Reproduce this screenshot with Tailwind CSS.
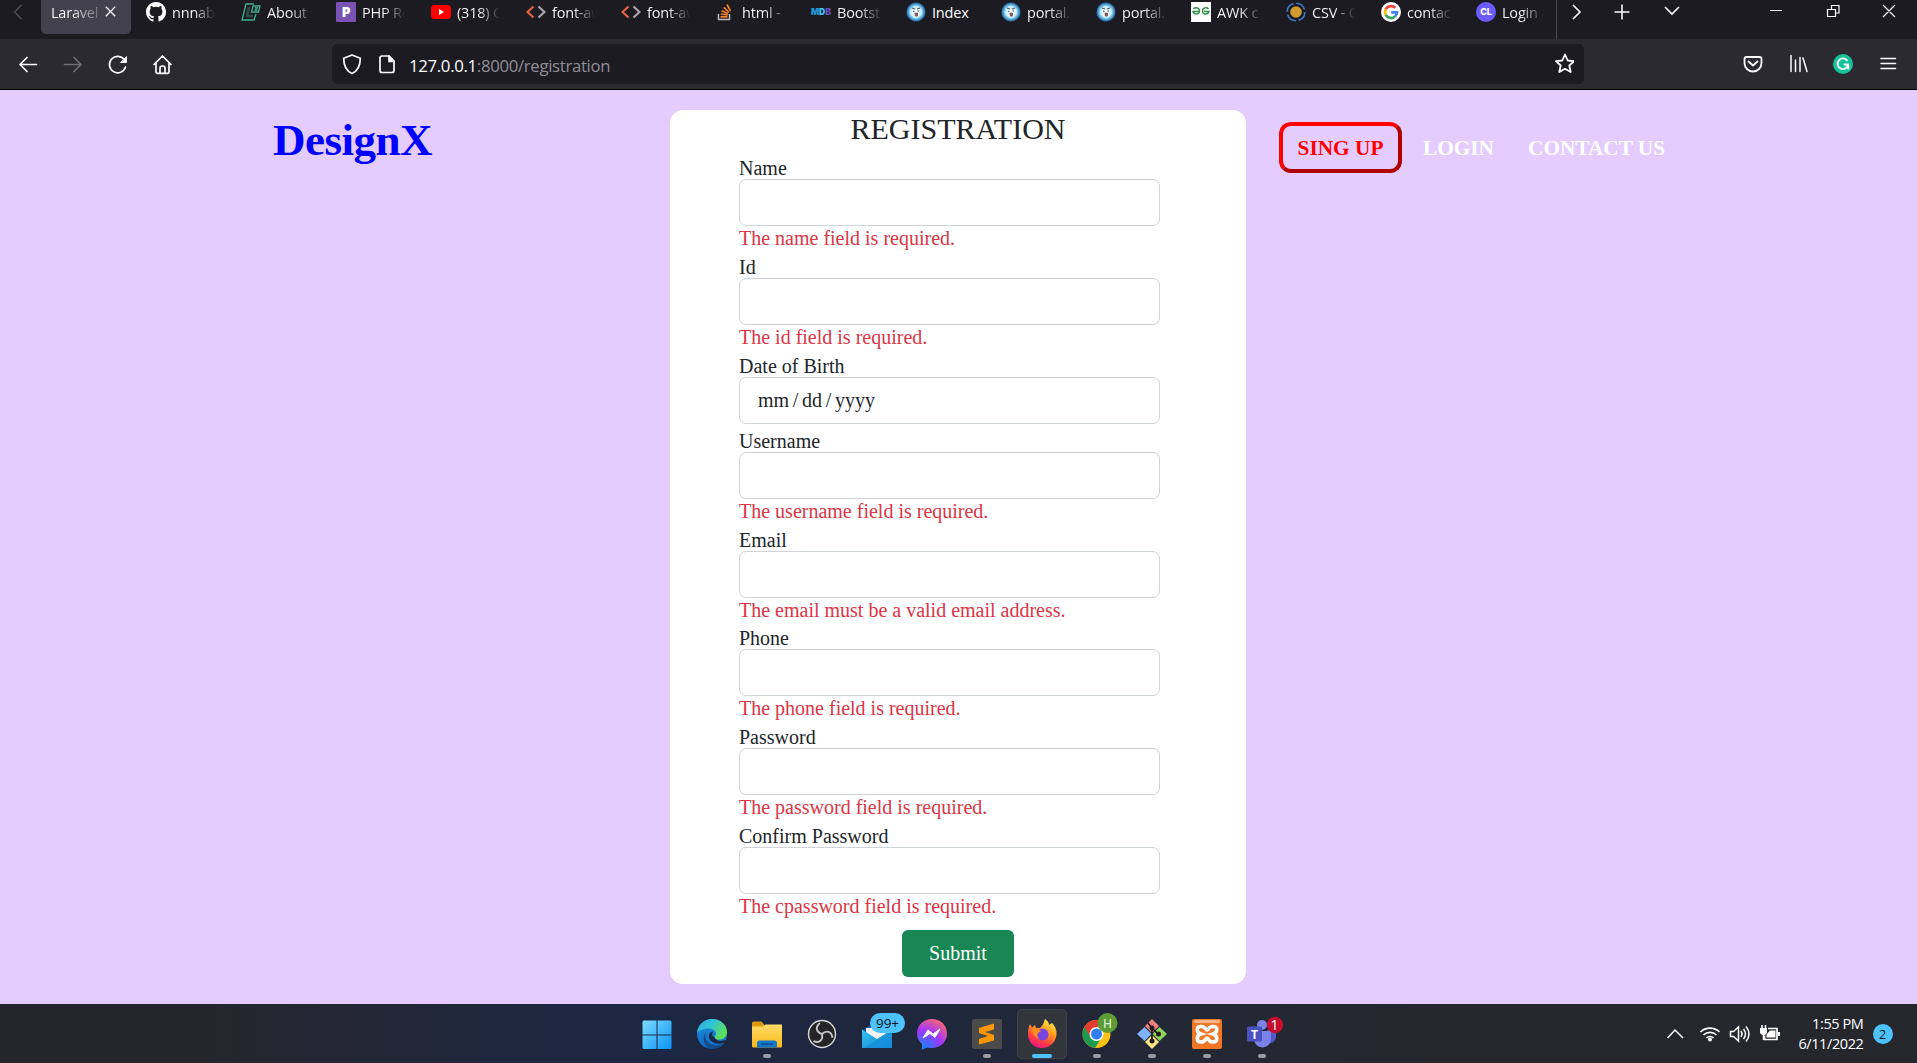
<!DOCTYPE html>
<html lang="en">
<head>
<meta charset="utf-8">
<title>Laravel</title>
<script src="https://cdn.jsdelivr.net/npm/@tailwindcss/browser@4"></script>
</head>
<body class="w-[1917px] h-[1063px] overflow-hidden flex flex-col bg-[#e4ccff] font-['Liberation_Serif',serif]">

<svg class="absolute w-0 h-0">
  <defs>
    <linearGradient id="win" gradientUnits="userSpaceOnUse" x1="2" y1="1" x2="31" y2="30"><stop offset="0" stop-color="#7fdcff"/><stop offset="1" stop-color="#0a94f5"/></linearGradient>
    <linearGradient id="edgeA" x1="0" y1="0" x2="1" y2=".6"><stop offset="0" stop-color="#2aa8e8"/><stop offset=".5" stop-color="#35c6d2"/><stop offset="1" stop-color="#5fe050"/></linearGradient>
    <linearGradient id="edgeB" x1="0" y1="0" x2="0" y2="1"><stop offset="0" stop-color="#2090e0"/><stop offset="1" stop-color="#0d6cc4"/></linearGradient>
    <linearGradient id="fold" x1="0" y1="0" x2="0" y2="1"><stop offset="0" stop-color="#ffdc6b"/><stop offset="1" stop-color="#f9b917"/></linearGradient>
    <radialGradient id="msg" cx=".2" cy="1" r="1.15"><stop offset="0" stop-color="#0a8cff"/><stop offset=".55" stop-color="#a035ff"/><stop offset="1" stop-color="#ff6b62"/></radialGradient>
    <linearGradient id="ffx" x1=".8" y1="0" x2=".3" y2="1"><stop offset="0" stop-color="#fff04a"/><stop offset=".4" stop-color="#ff9a1e"/><stop offset=".75" stop-color="#ff3a45"/><stop offset="1" stop-color="#f0148c"/></linearGradient>
    <radialGradient id="face"><stop offset="0" stop-color="#fff"/><stop offset=".55" stop-color="#c9eefb"/><stop offset=".8" stop-color="#4a9fd4"/><stop offset="1" stop-color="#1d4f86"/></radialGradient>
    <linearGradient id="mail" x1="0" y1="0" x2="1" y2="1"><stop offset="0" stop-color="#35c3f2"/><stop offset="1" stop-color="#1183d0"/></linearGradient>
    <symbol id="code" viewBox="0 0 20 20"><path d="M7.500 4.500L1.500 10l6 5.500" fill="none" stroke="#e8663f" stroke-width="2.200"/><path d="M12.500 4.500l6 5.500-6 5.500" fill="none" stroke="#a9a9ad" stroke-width="2.200"/></symbol>
    <symbol id="portal" viewBox="0 0 20 20"><circle cx="10" cy="10" r="9.700" fill="url(#face)"/><path d="M6 6l3 1M11 7l3-1" stroke="#555" stroke-width="1.200"/><path d="M8.500 11l1.500-.5 2 .5v2.500l-1.500 1.300-1.500-1z" fill="#8a5550"/><path d="M7 9.300h1.500M11.500 9h1.500" stroke="#444" stroke-width="1"/></symbol>
    <symbol id="cl" viewBox="0 0 20 20"><circle cx="10" cy="10" r="10" fill="#6c5cff"/><text x="10" y="13.300" text-anchor="middle" font-family="Inter" font-weight="800" font-size="9" fill="#fff">CL</text></symbol>
  </defs>
</svg>

<!-- Tab strip -->
<div class="h-[39px] shrink-0 flex bg-[#1c1b22] text-[#fbfbfe] text-[14.500px] tracking-[-0.2px] font-['Open_Sans',sans-serif]">
  <div class="w-[41px] flex"><svg class="w-[10px] h-[16px] ml-[13px] mt-[4px]" viewBox="0 0 10 16" fill="none" stroke="#4b4a52" stroke-width="1.500"><path d="M8.500 1L1.500 8l7 7"/></svg></div>
  <div class="w-[90px] h-[34px] flex rounded-b-[5px] bg-[#42414d] pl-[10px]">
    <span class="w-[47px] h-[26px] leading-[26px] overflow-hidden whitespace-nowrap bg-linear-to-r from-white from-40% to-white/25 bg-clip-text text-transparent">Laravel</span>
    <svg class="w-[11px] h-[11px] ml-[7px] mt-[6px]" viewBox="0 0 11 11" stroke="#fbfbfe" stroke-width="1.300"><path d="M.8.8l9.400 9.400M10.200.8L.8 10.200"/></svg>
  </div>
  <div class="w-[1426px] flex pl-[15px] border-r border-[#4a4950]">
    <div class="w-[95px] shrink-0 flex pt-[2px]"><svg class="w-5 h-5 shrink-0" viewBox="0 0 16 16" fill="#fff"><path d="M8 0C3.580 0 0 3.580 0 8c0 3.540 2.290 6.530 5.470 7.590.4.070.55-.17.55-.38 0-.19-.01-.82-.01-1.490-2.010.37-2.530-.49-2.690-.94-.09-.23-.48-.94-.82-1.130-.28-.15-.68-.52-.01-.53.63-.01 1.080.58 1.230.82.720 1.210 1.870.87 2.330.66.070-.52.280-.87.510-1.070-1.780-.2-3.640-.89-3.640-3.950 0-.87.310-1.590.82-2.150-.08-.2-.36-1.020.08-2.120 0 0 .67-.21 2.200.82a7.400 7.400 0 0 1 4 0c1.530-1.040 2.200-.82 2.200-.82.440 1.100.16 1.920.08 2.120.510.560.82 1.270.82 2.150 0 3.070-1.870 3.750-3.650 3.950.29.25.54.73.54 1.480 0 1.070-.01 1.930-.01 2.200 0 .21.150.46.550.38A8 8 0 0 0 8 0z"/></svg><span class="ml-[6px] w-[43px] h-[22px] leading-[22px] overflow-hidden whitespace-nowrap bg-linear-to-r from-white from-50% to-white/0 bg-clip-text text-transparent">nnnabil</span></div>
    <div class="w-[95px] shrink-0 flex pt-[2px]"><svg class="w-5 h-5 shrink-0" viewBox="0 0 20 20" fill="none" stroke="#43b08a" stroke-width="1.300"><path d="M13 2H5L1 18h12l2-6"/><path d="M8 5L6 14h6" stroke="#2c4d44" stroke-width="2.500"/><path d="M12 4h7l-1.500 6h-7zM14 6h3M13.500 8h3"/></svg><span class="ml-[6px] w-[43px] h-[22px] leading-[22px] whitespace-nowrap bg-linear-to-r from-white from-50% to-white/20 bg-clip-text text-transparent">About</span></div>
    <div class="w-[95px] shrink-0 flex pt-[2px]"><svg class="w-5 h-5 shrink-0" viewBox="0 0 20 20"><rect width="20" height="20" rx="1" fill="#7952b3"/><text x="10" y="15.200" text-anchor="middle" font-family="Open Sans" font-weight="800" font-size="14.500" fill="#fff">P</text></svg><span class="ml-[6px] w-[43px] h-[22px] leading-[22px] overflow-hidden whitespace-nowrap bg-linear-to-r from-white from-50% to-white/0 bg-clip-text text-transparent">PHP Re</span></div>
    <div class="w-[95px] shrink-0 flex pt-[2px]"><svg class="w-5 h-5 shrink-0" viewBox="0 0 20 20"><rect y="3" width="20" height="14" rx="3.500" fill="#f00"/><path d="M8 7l5 3-5 3z" fill="#fff"/></svg><span class="ml-[6px] w-[43px] h-[22px] leading-[22px] overflow-hidden whitespace-nowrap bg-linear-to-r from-white from-50% to-white/0 bg-clip-text text-transparent">(318) C</span></div>
    <div class="w-[95px] shrink-0 flex pt-[2px]"><svg class="w-5 h-5 shrink-0"><use href="#code"/></svg><span class="ml-[6px] w-[43px] h-[22px] leading-[22px] overflow-hidden whitespace-nowrap bg-linear-to-r from-white from-50% to-white/0 bg-clip-text text-transparent">font-aw</span></div>
    <div class="w-[95px] shrink-0 flex pt-[2px]"><svg class="w-5 h-5 shrink-0"><use href="#code"/></svg><span class="ml-[6px] w-[43px] h-[22px] leading-[22px] overflow-hidden whitespace-nowrap bg-linear-to-r from-white from-50% to-white/0 bg-clip-text text-transparent">font-aw</span></div>
    <div class="w-[95px] shrink-0 flex pt-[2px]"><svg class="w-5 h-5 shrink-0" viewBox="0 0 20 20" fill="none"><path d="M2.500 12v5.500h11V12" stroke="#bcbbbb" stroke-width="1.500"/><path d="M4.500 14.800h7M4.700 12l7 1M5.500 8.700l6.500 3M7.700 5.300l5.300 5M11 2.500l3.500 6.300" stroke="#f48024" stroke-width="1.700"/></svg><span class="ml-[6px] w-[43px] h-[22px] leading-[22px] whitespace-nowrap bg-linear-to-r from-white from-50% to-white/20 bg-clip-text text-transparent">html -</span></div>
    <div class="w-[95px] shrink-0 flex pt-[2px]"><svg class="w-5 h-5 shrink-0" viewBox="0 0 20 20"><g font-family="Inter" font-weight="900" font-size="9"><text x="0" y="13" textLength="8" lengthAdjust="spacingAndGlyphs" fill="#2196d8">M</text><text x="8" y="13" textLength="6" lengthAdjust="spacingAndGlyphs" fill="#3ec6f2">D</text><text x="14" y="13" textLength="6" lengthAdjust="spacingAndGlyphs" fill="#6649b5">B</text></g></svg><span class="ml-[6px] w-[43px] h-[22px] leading-[22px] whitespace-nowrap bg-linear-to-r from-white from-50% to-white/10 bg-clip-text text-transparent">Bootst</span></div>
    <div class="w-[95px] shrink-0 flex pt-[2px]"><svg class="w-5 h-5 shrink-0"><use href="#portal"/></svg><span class="ml-[6px] w-[43px] h-[22px] leading-[22px] whitespace-nowrap">Index</span></div>
    <div class="w-[95px] shrink-0 flex pt-[2px]"><svg class="w-5 h-5 shrink-0"><use href="#portal"/></svg><span class="ml-[6px] w-[43px] h-[22px] leading-[22px] whitespace-nowrap bg-linear-to-r from-white from-50% to-white/10 bg-clip-text text-transparent">portal.</span></div>
    <div class="w-[95px] shrink-0 flex pt-[2px]"><svg class="w-5 h-5 shrink-0"><use href="#portal"/></svg><span class="ml-[6px] w-[43px] h-[22px] leading-[22px] whitespace-nowrap bg-linear-to-r from-white from-50% to-white/10 bg-clip-text text-transparent">portal.</span></div>
    <div class="w-[95px] shrink-0 flex pt-[2px]"><svg class="w-5 h-5 shrink-0" viewBox="0 0 20 20"><rect width="20" height="20" fill="#fff"/><g fill="none" stroke="#2f8d46" stroke-width="1.400"><path d="M2.500 7C4 5 8.500 5.500 8.500 9s-5 4.500-6.500 0.500h6.500M17.500 7C16 5 11.500 5.500 11.500 9s5 4.500 6.500 0.500h-5"/></g></svg><span class="ml-[6px] w-[43px] h-[22px] leading-[22px] whitespace-nowrap bg-linear-to-r from-white from-50% to-white/10 bg-clip-text text-transparent">AWK c</span></div>
    <div class="w-[95px] shrink-0 flex pt-[2px]"><svg class="w-5 h-5 shrink-0" viewBox="0 0 20 20"><circle cx="10" cy="10" r="5.800" fill="#d09a32"/><circle cx="10" cy="10" r="8.800" fill="none" stroke="#3d79c4" stroke-width="1.600" stroke-dasharray="11 2.820"/></svg><span class="ml-[6px] w-[43px] h-[22px] leading-[22px] overflow-hidden whitespace-nowrap bg-linear-to-r from-white from-50% to-white/0 bg-clip-text text-transparent">CSV - C</span></div>
    <div class="w-[95px] shrink-0 flex pt-[2px]"><svg class="w-5 h-5 shrink-0" viewBox="0 0 20 20"><circle cx="10" cy="10" r="10" fill="#fff"/><g fill="none" stroke-width="2.700"><path d="M14.300 5.900A6 6 0 0 0 4.700 7.200" stroke="#ea4335"/><path d="M4.700 7.200a6 6 0 0 0 0 5.600" stroke="#fbbc05"/><path d="M4.700 12.800a6 6 0 0 0 9.300 1.700" stroke="#34a853"/><path d="M14 14.500a6 6 0 0 0 2-4.200H10.200" stroke="#4285f4"/></g></svg><span class="ml-[6px] w-[43px] h-[22px] leading-[22px] whitespace-nowrap bg-linear-to-r from-white from-50% to-white/10 bg-clip-text text-transparent">contac</span></div>
    <div class="w-[80px] shrink-0 flex pt-[2px]"><svg class="w-5 h-5 shrink-0"><use href="#cl"/></svg><span class="ml-[6px] w-[43px] h-[22px] leading-[22px] overflow-hidden whitespace-nowrap bg-linear-to-r from-white from-40% to-white/0 bg-clip-text text-transparent">Login a</span></div>
  </div>
  <svg class="w-[360px] h-[39px]" viewBox="1557 0 360 39" fill="none" stroke="#fbfbfe" stroke-width="1.600"><path d="M1573 5l7 7-7 7M1614.500 12h15M1622 4.500v15M1665 7l7 7 7-7"/><path d="M1770 10.500h12M1827.500 9.500h8v7h-8zM1831.500 9v-3.500h7.500v7.500h-3M1883 5l12 12M1895 5l-12 12" stroke-width="1.200"/></svg>
</div>

<!-- Navigation toolbar -->
<div class="h-[51px] shrink-0 flex items-start bg-[#2b2a33] border-b border-black">
  <svg class="w-[332px] h-[50px]" viewBox="0 39 332 50" fill="none" stroke="#fbfbfe" stroke-width="1.700" stroke-linecap="round" stroke-linejoin="round">
    <path d="M20 64.500h16.500M27 57.500l-7 7 7 7"/>
    <path d="M64.500 64.500H81M74 57.500l7 7-7 7" stroke="#706f78"/>
    <path d="M124.500 60a8.200 8.200 0 1 0 1 7"/><path d="M126.500 57v5.500H121z" fill="#fbfbfe" stroke-width="1"/>
    <path d="M154 64.500l8.500-8.500 8.500 8.500M156 63v9q0 1.300 1.300 1.300h10.400q1.300 0 1.300-1.300v-9M160 73v-5q0-2 2.500-2t2.500 2v5"/>
  </svg>
  <div class="w-[1252px] h-[40px] mt-[5px] rounded-[5px] bg-[#1c1b22] flex items-center">
    <svg class="w-[77px] h-[40px]" viewBox="332 44 77 40" fill="none" stroke="#fbfbfe" stroke-width="1.700" stroke-linejoin="round"><path d="M352 55l8.300 3.300c0 7-2 12.500-8.300 15.200-6.300-2.700-8.300-8.200-8.300-15.200z"/><path d="M382 56h7l5 5v9.500q0 2-2 2H382q-2 0-2-2V58q0-2 2-2z"/><path d="M389 56v5.500h5z" fill="#fbfbfe"/></svg>
    <span class="w-[1141px] pt-[3px] font-['Open_Sans',sans-serif] text-[16.800px] tracking-[-0.330px] leading-6 whitespace-nowrap text-[#8f8e96]"><span class="text-[#fbfbfe]">127.0.0.1</span>:8000/registration</span>
    <svg class="w-[24px] h-[24px]" viewBox="0 0 24 24" fill="none" stroke="#fbfbfe" stroke-width="1.800" stroke-linejoin="round"><path d="M15 2.500l2.700 6 6.300.7-4.700 4.300 1.400 6.500-5.700-3.200L9.300 20l1.400-6.500L6 9.200l6.300-.7z"/></svg>
  </div>
  <svg class="w-[333px] h-[50px]" viewBox="1584 39 333 50" fill="none" stroke="#fbfbfe" stroke-width="1.800" stroke-linecap="round" stroke-linejoin="round">
    <path d="M1746.500 57h13q2 0 2 2v4a8.500 8.500 0 0 1-17 0v-4q0-2 2-2zM1748.500 61.500l4.500 4 4.500-4"/>
    <path d="M1791 55.500v16M1795.500 60v11.500M1800 57.500v14M1803 58l4 13.500" stroke-width="1.500"/>
    <circle cx="1843" cy="64" r="10" fill="#15c39a" stroke="none"/><path d="M1847 60.300a5.300 5.300 0 1 0 1.200 4.200h-3.700M1848.300 64.800v4" stroke-width="1.800"/>
    <path d="M1881 58.500h14.500M1881 63.500h14.500M1881 68.500h14.500" stroke-width="1.500"/>
  </svg>
</div>

<!-- Page -->
<main class="h-[914px] shrink-0 flex items-start pt-5 bg-[#e4ccff]">
  <h1 class="w-[670px] shrink-0 pl-[273px] pt-[5px] text-[45px] leading-[50px] tracking-[-0.500px] font-bold text-[#00f]">DesignX</h1>
  <form class="w-[576px] shrink-0 h-[874px] rounded-[13px] bg-white flex flex-col text-[20px] leading-[24px] text-[#212529]">
    <h2 class="h-[41px] text-center text-[30px] leading-[38px]">REGISTRATION</h2>
    <div class="pl-[69px] flex flex-col gap-[4px] [&_input]:block [&_input]:w-[421px] [&_input]:h-[47px] [&_input]:rounded-[7px] [&_input]:border [&_input]:border-[#ced4da] [&_input]:px-[18px] [&_p]:h-[23.800px] [&_p]:text-[#dc3545] [&_label]:block [&_label]:h-[24px] [&_label]:leading-[26px]">
      <div class="pt-[4.200px]"><label>Name</label><input type="text"><p>The name field is required.</p></div>
      <div><label>Id</label><input type="text"><p>The id field is required.</p></div>
      <div><label>Date of Birth</label><input type="text" value="mm / dd / yyyy" class="[word-spacing:-1.300px]"></div>
      <div><label>Username</label><input type="text"><p>The username field is required.</p></div>
      <div><label>Email</label><input type="text"><p>The email must be a valid email address.</p></div>
      <div><label>Phone</label><input type="text"><p>The phone field is required.</p></div>
      <div><label>Password</label><input type="password"><p>The password field is required.</p></div>
      <div><label>Confirm Password</label><input type="password"><p>The cpassword field is required.</p></div>
    </div>
    <button type="button" class="w-[112px] h-[47px] mt-[12px] mx-auto rounded-[6px] bg-[#198754] text-white">Submit</button>
  </form>
  <nav class="flex items-center pl-[33px] pt-[12px] text-[21.300px] leading-6 font-bold text-white whitespace-nowrap">
    <a class="w-[123px] shrink-0 h-[51px] flex items-center justify-center rounded-[12px] border-4 border-t-[#f00] border-l-[#f00] border-r-[#b00000] border-b-[#b00000] text-[#f00]">SING UP</a>
    <a class="w-[126px] shrink-0 pl-[21px]">LOGIN</a>
    <a>CONTACT US</a>
  </nav>
</main>

<!-- Taskbar -->
<footer class="h-[59px] shrink-0 flex items-start bg-linear-to-r from-[#25262c] from-10% via-[#1c2744] via-34% to-[#25272d] to-75% text-white font-['Open_Sans',sans-serif]">
  <div class="w-[1037px] shrink-0 flex pl-[629.500px] pt-[5px] box-content [&>div]:w-[55px] [&>div]:h-[50px] [&>div]:shrink-0 [&>div]:flex [&>div]:flex-col [&>div]:items-center [&>div]:pt-[10px] [&>div>svg]:w-[34px] [&>div>svg]:h-[34px] [&>div>svg]:overflow-visible [&>div>svg]:shrink-0 [&>div>i]:block [&>div>i]:h-[4px] [&>div>i]:w-[8px] [&>div>i]:mt-[1px] [&>div>i]:rounded-full [&>div>i]:bg-[#9a9ca2]">
    <div><svg viewBox="0 0 34 34"><path d="M2.500 3q0-1.500 1.500-1.500h12.500v14H2.500zM17.500 1.500h12.500q1.500 0 1.500 1.500v12.500H17.500zM2.500 16.500h14V30H4q-1.500 0-1.500-1.500zM17.500 16.500h14v12q0 1.500-1.500 1.500H17.500z" fill="url(#win)"/></svg></div>
    <div><svg viewBox="0 0 34 34"><circle cx="17" cy="15" r="15" fill="url(#edgeB)"/><path d="M2 14C3 5 10 0 17 0c9 0 15 6 15 13 0 5-4 7.500-8 7.500-3.500 0-5-1.500-4-3 3-4-1-8-6-8C9 9.500 4 11 2 14z" fill="url(#edgeA)"/><path d="M13.500 10C9 13 9 20 14 24c4 3 10 3.500 15 0-3 5-9 7-14 5.500C8 27 6 15 13.500 10z" fill="#164a86"/><path d="M19 18q-3-1-1-5.500-5 1-4 6c1 5 9 8 15.500 5l1.200-1.200q.5-1.300-1-1.300-7 3-10.700-3z" fill="#1c2844"/></svg></div>
    <div><svg viewBox="0 0 34 34"><path d="M2 4q0-1.500 1.500-1.500h8l3 3.500V9H2z" fill="#dc9a10"/><path d="M2 7.500h11l2.500-2H32V27q0 1.500-1.500 1.500h-27Q2 28.500 2 27z" fill="url(#fold)"/><path d="M7 28.500V24q0-2.500 2.500-2.500h15Q27 21.500 27 24v4.500z" fill="#1476c8"/><path d="M11 25h12" stroke="#0b4a85" stroke-width="1.300"/></svg><i></i></div>
    <div><svg viewBox="0 0 34 34"><circle cx="17" cy="15" r="13.500" fill="#252427" stroke="#d8d8d8" stroke-width="1.400"/><g fill="none" stroke="#c6c6c6" stroke-width="1.900"><path id="obs" d="M17 15C11 13 10 8 15 4"/><use href="#obs" transform="rotate(120 17 15)"/><use href="#obs" transform="rotate(240 17 15)"/></g></svg></div>
    <div><svg viewBox="0 0 34 34"><path d="M2 11L17 2l15 9v8H2z" fill="#0e4f9c"/><path d="M6 9h22v8l-11 5-11-8z" fill="#f3f3f3"/><path d="M2 10.500L17 20l15-9.500V29H2z" fill="url(#mail)"/><path d="M32 12v17H4z" fill="#168fd8" opacity=".7"/><rect x="10" y="-6" width="35" height="20" rx="10" fill="#4cc2ff"/><text x="27.500" y="8.500" text-anchor="middle" font-family="Open Sans" font-size="13.500" fill="#111">99+</text></svg></div>
    <div><svg viewBox="0 0 34 34"><path d="M17 0c9 0 15 6.500 15 14.500S26 29 17 29c-2 0-3 0-4.500-.5L7 30.500V25C4 22.500 2 19 2 14.500 2 6.500 8 0 17 0z" fill="url(#msg)"/><path d="M8 19l5-8 5 4 7-5-5 8.500-5-4z" fill="#fff" stroke="#fff"/></svg></div>
    <div><svg viewBox="0 0 34 34"><rect x="2" width="30" height="30" rx="2" fill="#4b4b4b"/><path d="M9 9l15-4.500v6L15 13l9 3v5.500L9 25.500V20l9-3-9-3z" fill="#ff9800"/></svg><i></i></div>
    <div><div class="-mt-[10px] w-[50px] h-[50px] flex flex-col items-center pt-[9px] rounded-[5px] border border-[#41434b] bg-[#33353d]"><svg class="w-[34px] h-[34px] shrink-0" viewBox="0 0 34 34"><path d="M5 5l2 3.500 3-2.500 1 3h4l3-3.500L20 0c3 2 4 4 4 6l3-2c6 6 5 13 3 17-2.500 5-7.500 8-13 8C9 29 3 23 3 15c0-4 .5-7 2-10z" fill="url(#ffx)"/><circle cx="17.500" cy="15.500" r="6" fill="#7646df"/><path d="M7 10q5-2 9 2l-3 2q-2 4 2 6-7-1-8-10z" fill="#ff8f1c"/></svg><i class="block w-[20px] h-[4px] mt-[1px] rounded-full bg-[#4cc2ff]"></i></div></div>
    <div><svg viewBox="0 0 34 34"><circle cx="16.500" cy="15" r="14" fill="#fbc116"/><path d="M4.400 8a14 14 0 0 1 24.200 0H16.500z" fill="#e33b2e"/><path d="M4.400 8a14 14 0 0 0 10.500 20.900L22 18l-10 1.500z" fill="#1d9a50"/><path d="M4.400 8a14 14 0 0 1 12.100-7v8l-6 9z" fill="#e33b2e"/><circle cx="16.500" cy="15" r="7" fill="#fff"/><circle cx="16.500" cy="15" r="5.500" fill="#2f7df0"/><circle cx="27.500" cy="4" r="10" fill="#5f9b34"/><text x="27.500" y="8.500" text-anchor="middle" font-family="Open Sans" font-weight="600" font-size="12" fill="#dbe9cf">H</text></svg><i></i></div>
    <div><svg viewBox="0 0 34 34"><path d="M17 0l7 7-7 7-7-7z" fill="#f08080"/><path d="M9.500 8l7 7-7 7-7.500-7z" fill="#80b3ff"/><path d="M24.500 8l7.500 7-7.500 7-7-7z" fill="#8dd35f"/><path d="M17 16l7 7-7 7-7-7z" fill="#ffe680"/><path d="M13 4l4 5v14M17 9l6 6" stroke="#231a1a" stroke-width="1.700" fill="none"/><circle cx="17" cy="9" r="2.500" fill="#231a1a"/><circle cx="17" cy="22" r="2.500" fill="#231a1a"/><circle cx="23.500" cy="15" r="2.500" fill="#231a1a"/></svg><i></i></div>
    <div><svg viewBox="0 0 34 34"><rect x="2" width="30" height="30" rx="2" fill="#ee7625"/><rect x="4" y="1" width="26" height="3" rx="1.500" fill="#f8b589"/><path d="M11 7.500c-5 0-5 6 0 7.500-5 1.500-5 8 0 8s4-4 6-4 1 4 6 4 5-6.500 0-8c5-1.500 5-7.500 0-7.500s-4 3.500-6 3.500-1-3.500-6-3.500z" fill="none" stroke="#fff" stroke-width="3.600"/></svg><i></i></div>
    <div><svg viewBox="0 0 34 34"><circle cx="17" cy="6" r="5" fill="#7b83eb"/><path d="M22 11h9v7a7 7 0 0 1-9 6z" fill="#4f58c9"/><path d="M9 12h17v8a8.500 8.500 0 0 1-17 0z" fill="#7b83eb"/><rect x="2" y="7.500" width="15" height="15" rx="1.500" fill="#4a52bd"/><text x="9.500" y="19.500" text-anchor="middle" font-family="Open Sans" font-weight="700" font-size="12" fill="#fff">T</text><circle cx="30" cy="6" r="8.200" fill="#c50f2e"/><text x="29.500" y="11" text-anchor="middle" font-family="Open Sans" font-size="14" fill="#fff">1</text></svg><i></i></div>
  </div>
  <svg class="w-[114px] h-[59px] shrink-0" viewBox="1667 1004 114 59" fill="none" stroke="#fff" stroke-width="1.500">
    <path d="M1667.500 1038l7.500-8 8 8"/>
    <path d="M1700.500 1032a13.500 13.500 0 0 1 19 0M1703.500 1035a9.500 9.500 0 0 1 13 0M1706.500 1038a5 5 0 0 1 7 0" stroke-width="1.700"/><circle cx="1710" cy="1039.500" r="2" fill="#fff" stroke="none"/>
    <path d="M1730.500 1031.500h3l5-4.500v14l-5-4.500h-3zM1741 1031q2 3 0 6M1743.500 1029q4 5 0 10M1746 1026.500q6 7.500 0 15"/>
    <path d="M1768 1028.500h9v11h-12.500v-4" stroke-width="1.700"/><path d="M1770 1030.500h5.500v7H1766.500v-3z M1778 1032h2v4h-2z M1760 1028h7v5l-2 2h-3l-2-2z" fill="#fff" stroke="none"/><path d="M1762 1025v4M1765.500 1025v4M1763.500 1034v6" stroke-width="1.600"/>
  </svg>
  <div class="w-[83px] shrink-0 pt-[10px] text-right text-[14.500px] leading-[20px] tracking-[-0.400px] whitespace-nowrap"><div>1:55 PM</div><div>6/11/2022</div></div>
  <div class="ml-[9px] mt-[20px] w-[20px] h-[20px] shrink-0 rounded-full bg-[#4cc2ff] text-[#111] text-[12.500px] leading-[21px] text-center">2</div>
</footer>
</body>
</html>
